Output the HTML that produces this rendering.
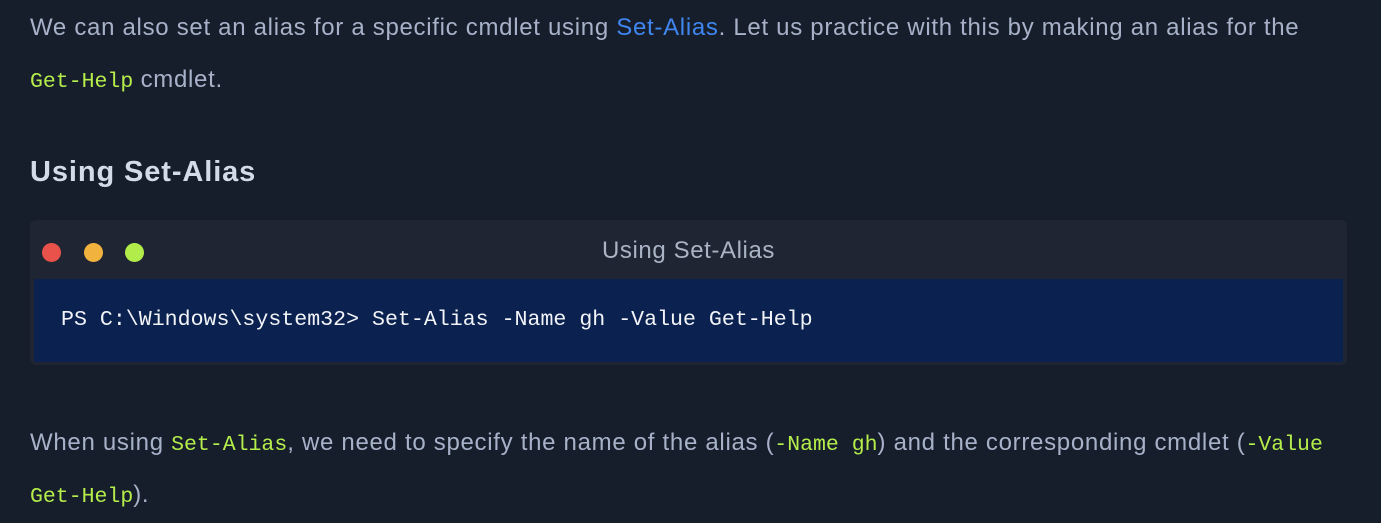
<!DOCTYPE html>
<html><head><meta charset="utf-8"><style>
body{margin:0;width:1381px;height:513px;background:#161d2b;overflow:hidden;position:relative;font-family:"Liberation Sans",sans-serif;color:#a7b2c9}
.p{position:absolute;left:30px;font-size:24px;letter-spacing:0.7px;line-height:52px;white-space:nowrap}
code{font-family:"Liberation Mono",monospace;color:#b5ee4b;font-size:21.5px;letter-spacing:0}
a{color:#3f86f0;text-decoration:none}
h2{position:absolute;left:30px;top:151px;margin:0;font-size:29px;letter-spacing:0.9px;line-height:42px;color:#d4dbe8;font-weight:bold}
.box{position:absolute;left:30px;top:220px;width:1317px;height:145px;background:#1f2532;border-radius:6px}
.dot{position:absolute;top:23px;width:19px;height:19px;border-radius:50%}
.title{position:absolute;left:0;right:0;top:17px;text-align:center;font-size:24px;letter-spacing:0.6px;color:#aab3c4}
.body{position:absolute;left:4px;top:59px;width:1309px;height:83px;background:#0b2150;color:#f2f4f8;font-family:"Liberation Mono",monospace;font-size:21.6px;line-height:83px;padding-left:27px;box-sizing:border-box;white-space:pre}
</style></head><body>
<div class="p" style="top:2px">We can also set an alias for a specific cmdlet using <a>Set-Alias</a>. Let us practice with this by making an alias for the</div>
<div class="p" style="top:54px"><code>Get-Help</code> cmdlet.</div>
<h2>Using Set-Alias</h2>
<div class="box">
<div class="dot" style="left:12px;background:#e8524a"></div>
<div class="dot" style="left:54px;background:#f2b33e"></div>
<div class="dot" style="left:95px;background:#b2ec4a"></div>
<div class="title">Using Set-Alias</div>
<div class="body">PS C:\Windows\system32&gt; Set-Alias -Name gh -Value Get-Help</div>
</div>
<div class="p" style="top:417px">When using <code>Set-Alias</code>, we need to specify the name of the alias (<code>-Name gh</code>) and the corresponding cmdlet (<code>-Value</code></div>
<div class="p" style="top:469px"><code>Get-Help</code>).</div>
</body></html>
